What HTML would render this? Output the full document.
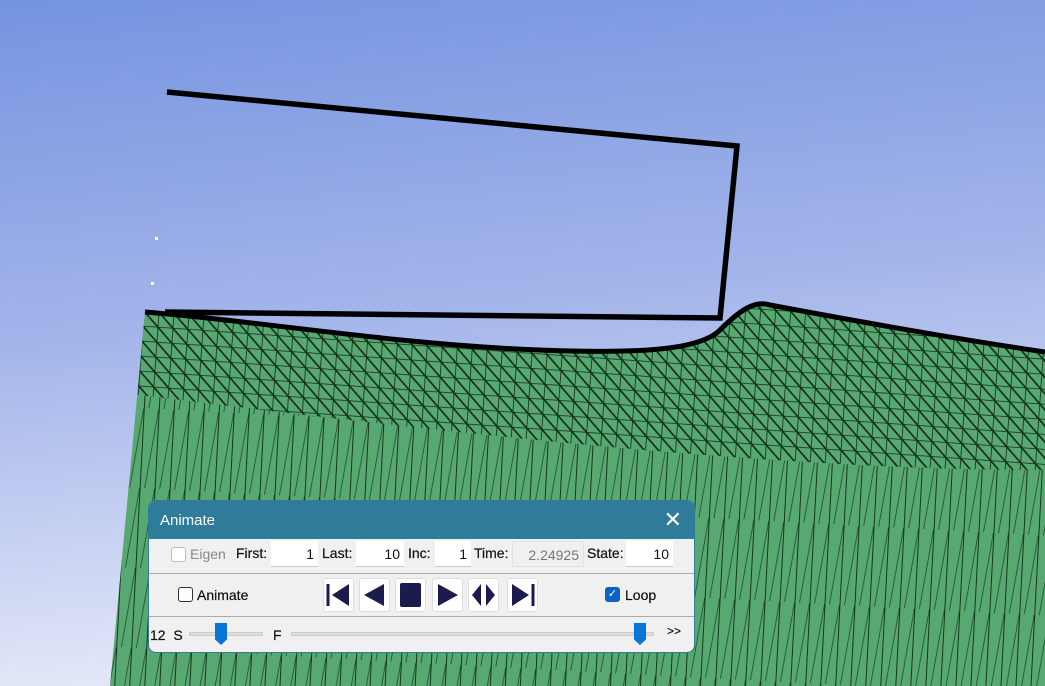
<!DOCTYPE html>
<html><head><style>
*{margin:0;padding:0;box-sizing:border-box}
body{width:1045px;height:686px;overflow:hidden;position:relative;font-family:"Liberation Sans",sans-serif;font-size:14px;color:#111}
svg.bg{position:absolute;left:0;top:0}
.dlg{position:absolute;left:148px;top:500px;width:547px;height:153px;background:#f0f0f0;border-radius:8px;overflow:hidden;border:1px solid #2e7b9a}
.tb{height:38px;background:#2e7b9a;color:#fff;font-size:15px;padding:11px 0 0 11px;position:relative}
.x{position:absolute;right:12px;top:6px;font-size:22px;font-weight:100}
.a{position:absolute;-webkit-text-stroke:0.2px #111}
.in{position:absolute;height:26px;background:#fff;border-bottom:1px solid #ccc;text-align:right;padding:5px 4px 0 0}
.sep{position:absolute;left:0;width:547px;height:1px;background:#aaa}
.btn{position:absolute;top:578px;width:31px;height:34px;background:#fff;border:1px solid #ddd;border-radius:3px}
.cb{position:absolute;width:15px;height:15px;border:1px solid #333;border-radius:3px;background:#fff}
.trk{position:absolute;height:4px;background:#ddd;border:1px solid #ccc}
.th{position:absolute;width:12px;height:22px;background:#0a74d8;clip-path:polygon(0 0,100% 0,100% 75%,50% 100%,0 75%)}
</style></head><body>
<svg class="bg" width="1045" height="686">
<defs>
<linearGradient id="g" x1="0" y1="0" x2="0.15" y2="1"><stop offset="0" stop-color="#7594e0"/><stop offset="0.5" stop-color="#a4b5ea"/><stop offset="1" stop-color="#e4e8f8"/></linearGradient>
<pattern id="m" width="15" height="15" patternUnits="userSpaceOnUse" patternTransform="rotate(4)">
<rect width="15" height="15" fill="#58a872"/>
<path d="M0 0H15M0 0V15M0 0L15 15" stroke="#0f2a16" stroke-width="1.6" fill="none"/></pattern>
<pattern id="v" width="15" height="80" patternUnits="userSpaceOnUse" patternTransform="rotate(3)">
<rect width="15" height="80" fill="#58a872"/>
<path d="M0 0V80" stroke="#0f2a16" stroke-width="1.8" fill="none"/><path d="M15 0L5 80" stroke="#1f4a2a" stroke-width="0.8" fill="none"/></pattern>
<clipPath id="c"><path d="M145 312 C250 320 400 345 540 350 C640 354 700 350 720 330 C740 310 755 300 770 305 C850 320 950 338 1045 352 V686 H110 Z"/></clipPath>
</defs>
<rect width="1045" height="686" fill="url(#g)"/>
<g clip-path="url(#c)">
<rect x="100" y="290" width="945" height="400" fill="url(#v)"/>
<path d="M100 300 H1045 V470 C800 470 500 440 100 390 Z" fill="url(#m)"/>
</g>
<path d="M145 312 C250 320 400 345 540 350 C640 354 700 350 720 330 C740 310 755 300 770 305 C850 320 950 338 1045 352" stroke="#000" stroke-width="5" fill="none"/>
<path d="M167 92 L737 146 L720 318 L165 312" stroke="#000" stroke-width="5.5" fill="none"/>
<rect x="155" y="237" width="3" height="3" fill="#fff"/><rect x="151" y="282" width="3" height="3" fill="#fff"/>
</svg>
<div class="dlg"><div class="tb">Animate<span class="x">✕</span></div></div>
<div class="cb" style="left:171px;top:547px;border-color:#bbb"></div>
<span class="a" style="left:190px;top:546px;color:#888;-webkit-text-stroke:0">Eigen</span>
<span class="a" style="left:236px;top:545px">First:</span>
<div class="in" style="left:271px;top:541px;width:47px">1</div>
<span class="a" style="left:322px;top:545px">Last:</span>
<div class="in" style="left:356px;top:541px;width:48px">10</div>
<span class="a" style="left:408px;top:545px">Inc:</span>
<div class="in" style="left:435px;top:541px;width:36px">1</div>
<span class="a" style="left:474px;top:545px">Time:</span>
<div class="in" style="left:512px;top:541px;width:72px;background:#f0f0f0;border:1px solid #e2e2e2;color:#777">2.24925</div>
<span class="a" style="left:587px;top:545px">State:</span>
<div class="in" style="left:626px;top:541px;width:47px">10</div>
<div class="sep" style="left:149px;top:573px;width:545px"></div>
<div class="cb" style="left:178px;top:587px"></div>
<span class="a" style="left:197px;top:587px">Animate</span>
<div class="btn" style="left:323px"><svg width="29" height="32"><path d="M4 5V27" stroke="#1b1b4d" stroke-width="3"/><path d="M25 5V27L8 16Z" fill="#1b1b4d"/></svg></div>
<div class="btn" style="left:359px"><svg width="29" height="32"><path d="M24 5V27L4 16Z" fill="#1b1b4d"/></svg></div>
<div class="btn" style="left:395px"><svg width="29" height="32"><rect x="4" y="4" width="21" height="24" rx="2" fill="#1b1b4d"/></svg></div>
<div class="btn" style="left:432px"><svg width="29" height="32"><path d="M5 5V27L25 16Z" fill="#1b1b4d"/></svg></div>
<div class="btn" style="left:468px"><svg width="29" height="32"><path d="M12 5V27L3 16Z M17 5V27L26 16Z" fill="#1b1b4d"/></svg></div>
<div class="btn" style="left:507px"><svg width="29" height="32"><path d="M4 5V27L21 16Z" fill="#1b1b4d"/><path d="M25 5V27" stroke="#1b1b4d" stroke-width="3"/></svg></div>
<div class="cb" style="left:605px;top:587px;background:#0a64c8;border-color:#0a64c8;color:#fff;font-size:11px;text-align:center;line-height:13px">✓</div>
<span class="a" style="left:625px;top:587px">Loop</span>
<div class="sep" style="left:149px;top:616px;width:545px"></div>
<span class="a" style="left:150px;top:627px">12&nbsp;&nbsp;S</span>
<div class="trk" style="left:189px;top:632px;width:74px"></div>
<div class="th" style="left:215px;top:623px"></div>
<span class="a" style="left:273px;top:627px">F</span>
<div class="trk" style="left:291px;top:632px;width:363px"></div>
<div class="th" style="left:634px;top:623px"></div>
<span class="a" style="left:667px;top:624px;font-size:12px">&gt;&gt;</span>
</body></html>
